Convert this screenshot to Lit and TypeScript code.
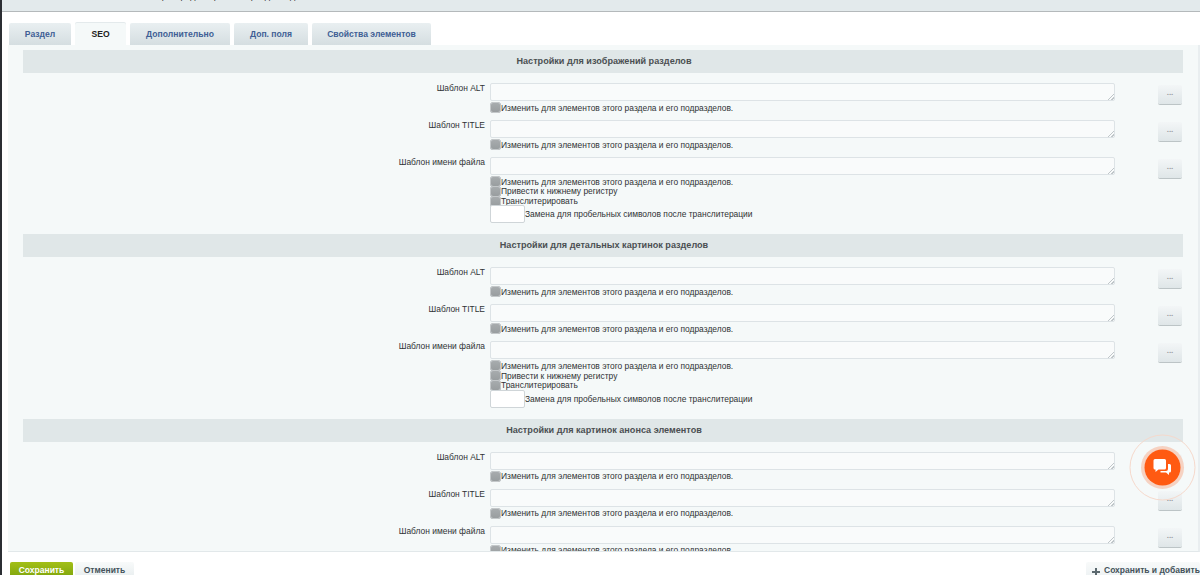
import { css, html, LitElement } from "lit";
import { customElement } from "lit/decorators.js";

const TABS = [
  { name: "Раздел", width: 62 },
  { name: "SEO", width: 51 },
  { name: "Дополнительно", width: 100 },
  { name: "Доп. поля", width: 74 },
  { name: "Свойства элементов", width: 119 },
];
const ACTIVE_TAB = "SEO";
const APPLY = "Изменить для элементов этого раздела и его подразделов.";
const SECTIONS = [
  "Настройки для изображений разделов",
  "Настройки для детальных картинок разделов",
  "Настройки для картинок анонса элементов",
];

@customElement("app-root")
export class AppRoot extends LitElement {
  static styles = css`
    :host {
      display: block;
      width: 1200px;
      height: 575px;
      overflow: hidden;
      font-family: "Liberation Sans", Arial, sans-serif;
      font-size: 8.43px;
      color: #303335;
    }
    .page {
      position: relative;
      display: flex;
      flex-direction: column;
      height: 575px;
      box-sizing: border-box;
      border-left: 2px solid #2b2e33;
      background: #fff;
      overflow: hidden;
    }
    .top {
      flex: none;
      height: 11px;
      background: #e3eaec;
      border-bottom: 1px solid #b4b9bb;
      overflow: hidden;
      padding-left: 148px;
      font-size: 9px;
      line-height: 11px;
    }
    .top span {
      display: block;
      margin-top: -9px;
      color: #333;
    }
    .tabs {
      flex: none;
      display: flex;
      gap: 4px;
      padding: 11px 0 0 7px;
    }
    .tab {
      height: 22px;
      line-height: 22px;
      text-align: center;
      font-size: 8.6px;
      font-weight: bold;
      color: #3f5f95;
      background: linear-gradient(#e9eff1, #d5dee1);
      border-radius: 2px 2px 0 0;
    }
    .tab.active {
      color: #222;
      background: #f5f9f9;
      box-shadow: 0 -1px 0 #e4eaec;
    }
    .panel {
      flex: none;
      height: 507px;
      box-sizing: border-box;
      margin-left: 6px;
      padding: 5px 15px 0;
      background: #f5f9f9;
      border-bottom: 1px solid #e2e8ea;
      border-right: 2px solid #e9eef0;
      overflow: hidden;
    }
    .head {
      height: 23px;
      line-height: 23px;
      padding-left: 2px;
      text-align: center;
      font-size: 9.1px;
      font-weight: bold;
      color: #4b4f52;
      background: #e0e7e8;
      margin-bottom: 10px;
    }
    .section {
      margin-bottom: 11px;
    }
    .row {
      display: grid;
      grid-template-columns: 462px 625px 1fr;
      column-gap: 5px;
      margin-bottom: 8px;
    }
    .label {
      text-align: right;
      line-height: 11px;
    }
    textarea {
      display: block;
      box-sizing: border-box;
      width: 625px;
      height: 18px;
      margin: 0 0 1px;
      padding: 0;
      border: 1px solid #dde3e6;
      border-radius: 2px;
      resize: none;
      outline: none;
      background-color: #f9fbfb;
      background-image: linear-gradient(
        135deg,
        transparent 45%,
        #bfc6c9 45%,
        #bfc6c9 58%,
        transparent 58%,
        transparent 72%,
        #bfc6c9 72%,
        #bfc6c9 85%,
        transparent 85%
      );
      background-size: 6px 6px;
      background-position: right bottom;
      background-repeat: no-repeat;
    }
    .check {
      display: flex;
      align-items: center;
      height: 10px;
      padding-top: 1px;
      box-sizing: border-box;
      line-height: 10px;
      white-space: nowrap;
    }
    .check + .check {
      height: 9.7px;
    }
    input[type="checkbox"] {
      appearance: none;
      flex: none;
      width: 11px;
      height: 11px;
      margin: 0;
      border-radius: 3.5px;
      background: linear-gradient(#a9adaf, #979c9e);
      box-shadow: inset 0 0 0 1px #c4c8ca;
    }
    .replace {
      display: flex;
      align-items: center;
      white-space: nowrap;
    }
    .replace input {
      box-sizing: border-box;
      flex: none;
      width: 35px;
      height: 18px;
      margin: 0;
      padding: 0;
      border: 1px solid #cfd5d8;
      border-radius: 2px;
      background: #fff;
      outline: none;
    }
    .more {
      width: 24px;
      height: 19px;
      margin: 2px 0 0 38px;
      padding: 0 0 3px;
      border: 0;
      border-radius: 2px;
      background: linear-gradient(#f3f6f7, #dfe6e8);
      box-shadow: 0 1px 0 #bcc4c6;
      color: #979c9e;
      font: bold 8px/10px "Liberation Sans", Arial, sans-serif;
    }
    .footer {
      flex: 1;
      display: flex;
      align-items: flex-start;
      padding: 10px 0 0 8px;
      gap: 2px;
    }
    .btn {
      height: 22px;
      line-height: 17px;
      box-sizing: border-box;
      text-align: center;
      font-size: 8.5px;
      font-weight: bold;
      border-radius: 2px 2px 0 0;
    }
    .save {
      width: 63px;
      color: #fff;
      background: linear-gradient(#a3bf17, #6f9a0a);
    }
    .cancel {
      width: 59px;
      color: #44525a;
      background: linear-gradient(#f8fafa, #e2e9eb);
    }
    .add {
      display: flex;
      align-items: flex-start;
      gap: 4px;
      width: 114px;
      box-sizing: border-box;
      margin-left: auto;
      padding-left: 6px;
      color: #44525a;
      white-space: nowrap;
      background: linear-gradient(#f8fafa, #e9eef0);
    }
    .add svg {
      flex: none;
      margin-top: 6px;
    }
    .fab {
      position: absolute;
      left: 1127px;
      top: 434px;
      width: 67px;
      height: 67px;
    }
  `;

  renderCheck(text: string) {
    return html`<label class="check">
      <input type="checkbox" /><span>${text}</span>
    </label>`;
  }

  renderRow(label: string, full = false) {
    return html`<div class="row">
      <div class="label">${label}</div>
      <div>
        <textarea></textarea>
        ${this.renderCheck(APPLY)}
        ${full
          ? html`${this.renderCheck("Привести к нижнему регистру")}
              ${this.renderCheck("Транслитерировать")}
              <div class="replace">
                <input type="text" /><span>Замена для пробельных символов после транслитерации</span>
              </div>`
          : ""}
      </div>
      <div><button class="more">...</button></div>
    </div>`;
  }

  render() {
    return html`
      <div class="page">
        <div class="top"><span>Форма редактирования раздела: доп</span></div>
        <div class="tabs">
          ${TABS.map(
            (t) => html`<div
              class="tab ${t.name === ACTIVE_TAB ? "active" : ""}"
              style="width: ${t.width}px"
            >
              ${t.name}
            </div>`
          )}
        </div>
        <div class="panel">
          ${SECTIONS.map(
            (s) => html`<div class="section">
              <div class="head">${s}</div>
              ${this.renderRow("Шаблон ALT")} ${this.renderRow("Шаблон TITLE")}
              ${this.renderRow("Шаблон имени файла", true)}
            </div>`
          )}
        </div>
        <div class="footer">
          <div class="btn save">Сохранить</div>
          <div class="btn cancel">Отменить</div>
          <div class="btn add">
            <svg width="8" height="8" viewBox="0 0 8 8"><path d="M3 0h2v3h3v2H5v3H3V5H0V3h3z" fill="#5b686e" /></svg>
            Сохранить и добавить
          </div>
        </div>
        <svg class="fab" viewBox="0 0 67 67">
          <circle cx="33.500" cy="33.500" r="32.500" fill="none" stroke="#f5d9cc" stroke-width="1" />
          <circle cx="33.500" cy="33.500" r="21.500" fill="#f6d2c2" />
          <circle cx="33.500" cy="33.500" r="18" fill="#ff5a12" />
          <path d="M26.500 25h9a1.500 1.500 0 0 1 1.500 1.500v7.500a1.500 1.500 0 0 1-1.500 1.500h-6l-3 2.500v-2.500h-.5a1.500 1.500 0 0 1-1.500-1.500v-7.500a1.500 1.500 0 0 1 1.500-1.500z" fill="#fff" />
          <path d="M39 30h1.500a1.500 1.500 0 0 1 1.500 1.500v5.500a1.500 1.500 0 0 1-1.500 1.500h-.5v2.500l-3-2.500h-5.500v-1.500h5.500a2 2 0 0 0 2-2z" fill="#fff" />
        </svg>
      </div>
    `;
  }
}
